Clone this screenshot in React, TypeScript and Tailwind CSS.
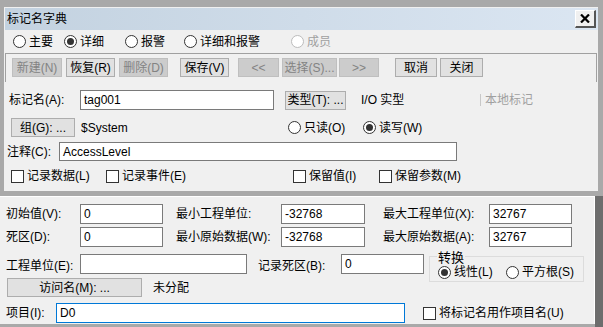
import React from 'react'

const font = { fontFamily: '"Liberation Sans", "Noto Sans CJK SC", sans-serif' }

function Radio({ label, checked, disabled, w }: { label: string; checked?: boolean; disabled?: boolean; w?: string }) {
  return (
    <div className={`flex items-center h-[14px] ${w ?? ''}`}>
      <span
        className={`w-[13px] h-[13px] rounded-full border bg-white flex items-center justify-center shrink-0 ${
          disabled ? 'border-[#bcbcbc]' : 'border-[#333333]'
        }`}
      >
        {checked && <span className="w-[7px] h-[7px] rounded-full bg-[#333333]" />}
      </span>
      <span className={`ml-[3px] whitespace-nowrap ${disabled ? 'text-[#a0a0a0]' : 'text-black'}`}>{label}</span>
    </div>
  )
}

function Check({ label, w }: { label: string; w?: string }) {
  return (
    <div className={`flex items-center h-[14px] ${w ?? ''}`}>
      <span className="w-[13px] h-[13px] border border-[#333333] bg-white shrink-0" />
      <span className="ml-[3px] whitespace-nowrap">{label}</span>
    </div>
  )
}

function Btn({ label, w, disabled }: { label: string; w: string; disabled?: boolean }) {
  return (
    <div
      className={`${w} h-[19px] shrink-0 flex items-center justify-center border whitespace-nowrap ${
        disabled ? 'bg-[#cccccc] border-[#bfbfbf] text-[#838383]' : 'bg-[#e1e1e1] border-[#adadad] text-black'
      }`}
    >
      {label}
    </div>
  )
}

function Input({ value, w, h = 'h-[20px]', focus }: { value?: string; w: string; h?: string; focus?: boolean }) {
  return (
    <div
      className={`${w} ${h} shrink-0 bg-white border flex items-center pl-[3px] ${
        focus ? 'border-[#0078d7]' : 'border-[#7a7a7a]'
      }`}
    >
      {value}
    </div>
  )
}

export default function App() {
  return (
    <div className="w-[603px] h-[327px] bg-[#a9a9a9] overflow-hidden text-[12px] text-black leading-none" style={font}>
      {/* upper dialog */}
      <div className="ml-[4px] mt-[7px] w-[594px] h-[184px] bg-[#f0f0f0] flex flex-col">
        <div className="ml-[1px] mt-[1px] h-[22px] bg-gradient-to-r from-[#c3d2e0] to-[#dbe6f2] flex items-center justify-between">
          <span className="ml-[2px] text-[12px]">标记名字典</span>
          <div className="mr-[2px] w-[21px] h-[18px] bg-[#f0f0f0] border-t border-l border-white border-r-[2px] border-b-[2px] border-r-[#555555] border-b-[#555555] flex items-center justify-center">
            <svg width="10" height="9" viewBox="0 0 10 9">
              <path d="M1 0.5 L9 8.5 M9 0.5 L1 8.5" stroke="#000" strokeWidth="2.2" />
            </svg>
          </div>
        </div>

        <div className="h-[23px] flex items-center">
          <Radio label="主要" w="ml-[9px] w-[51px]" />
          <Radio label="详细" checked w="w-[61px]" />
          <Radio label="报警" w="w-[59px]" />
          <Radio label="详细和报警" w="w-[107px]" />
          <Radio label="成员" disabled />
        </div>

        <div className="h-[29px] border-t border-l border-r border-[#a0a0a0] border-b-white ml-[1px] mr-[1px] flex items-start pt-[4px]">
          <div className="ml-[6px] flex">
            <Btn label="新建(N)" w="w-[50px]" disabled />
            <div className="ml-[4px]"><Btn label="恢复(R)" w="w-[49px]" /></div>
            <div className="ml-[4px]"><Btn label="删除(D)" w="w-[49px]" disabled /></div>
            <div className="ml-[12px]"><Btn label="保存(V)" w="w-[49px]" /></div>
            <div className="ml-[9px]"><Btn label="<<" w="w-[41px]" disabled /></div>
            <div className="ml-[3px]"><Btn label="选择(S)..." w="w-[55px]" disabled /></div>
            <div className="ml-[2px]"><Btn label=">>" w="w-[40px]" disabled /></div>
            <div className="ml-[16px]"><Btn label="取消" w="w-[42px]" /></div>
            <div className="ml-[3px]"><Btn label="关闭" w="w-[43px]" /></div>
          </div>
        </div>

        <div className="mt-[8px] h-[20px] flex items-center">
          <span className="ml-[5px] w-[71px]">标记名(A):</span>
          <Input value="tag001" w="w-[194px]" />
          <div className="ml-[11px]"><Btn label="类型(T): ..." w="w-[61px]" /></div>
          <span className="ml-[15px] w-[119px]">I/O 实型</span>
          <span className="w-[1px] h-[12px] bg-[#c8c8c8]" />
          <span className="ml-[4px] text-[#a0a0a0]">本地标记</span>
        </div>

        <div className="mt-[8px] h-[19px] flex items-center">
          <div className="ml-[7px]"><Btn label="组(G): ..." w="w-[64px]" /></div>
          <span className="ml-[6px] w-[207px]">$System</span>
          <Radio label="只读(O)" w="w-[75px]" />
          <Radio label="读写(W)" checked />
        </div>

        <div className="mt-[5px] h-[19px] flex items-center">
          <span className="ml-[3px] w-[52px]">注释(C):</span>
          <Input value="AccessLevel" w="w-[398px]" h="h-[19px]" />
        </div>

        <div className="mt-[8px] h-[14px] flex items-center">
          <Check label="记录数据(L)" w="ml-[7px] w-[95px]" />
          <Check label="记录事件(E)" w="w-[187px]" />
          <Check label="保留值(I)" w="w-[86px]" />
          <Check label="保留参数(M)" />
        </div>
      </div>

      {/* lower panel */}
      <div className="mt-[5px] flex h-[131px]">
        <div className="w-[595px] flex flex-col">
          <div className="h-[128px] bg-[#f0f0f0] border-t border-r border-white flex flex-col">
            <div className="mt-[7px] h-[20px] flex items-center">
              <span className="ml-[6px] w-[74px]">初始值(V):</span>
              <Input value="0" w="w-[83px]" />
              <span className="ml-[13px] w-[105px]">最小工程单位:</span>
              <Input value="-32768" w="w-[84px]" />
              <span className="ml-[18px] w-[106px]">最大工程单位(X):</span>
              <Input value="32767" w="w-[83px]" />
            </div>
            <div className="mt-[3px] h-[20px] flex items-center">
              <span className="ml-[6px] w-[74px]">死区(D):</span>
              <Input value="0" w="w-[83px]" />
              <span className="ml-[13px] w-[105px]">最小原始数据(W):</span>
              <Input value="-32768" w="w-[84px]" />
              <span className="ml-[18px] w-[106px]">最大原始数据(A):</span>
              <Input value="32767" w="w-[83px]" />
            </div>
            <div className="mt-[5px] h-[26px] flex items-start">
              <span className="ml-[6px] w-[74px] mt-[8px]">工程单位(E):</span>
              <div className="mt-[2px]"><Input w="w-[167px]" /></div>
              <span className="ml-[11px] w-[83px] mt-[8px]">记录死区(B):</span>
              <div className="mt-[2px]"><Input value="0" w="w-[83px]" /></div>
              <div className="ml-[5px] mt-[4px] w-[155px] h-[26px] border border-[#dcdcdc] relative flex items-center shrink-0">
                <span className="absolute left-[7px] top-[-6px] bg-[#f0f0f0] px-[1px] text-[13px]">转换</span>
                <div className="ml-[8px] mt-[6px] flex">
                  <Radio label="线性(L)" checked w="w-[68px]" />
                  <Radio label="平方根(S)" />
                </div>
              </div>
            </div>
            <div className="mt-[0px] h-[19px] flex items-center">
              <div className="ml-[7px]"><Btn label="访问名(M): ..." w="w-[135px]" /></div>
              <span className="ml-[11px]">未分配</span>
            </div>
            <div className="mt-[6px] h-[20px] flex items-center">
              <span className="ml-[6px] w-[50px]">项目(I):</span>
              <Input value="D0" w="w-[349px]" focus />
              <div className="ml-[18px]"><Check label="将标记名用作项目名(U)" /></div>
            </div>
          </div>
        </div>
        <div className="flex-1 bg-[#6d6d6d]" />
      </div>
    </div>
  )
}
